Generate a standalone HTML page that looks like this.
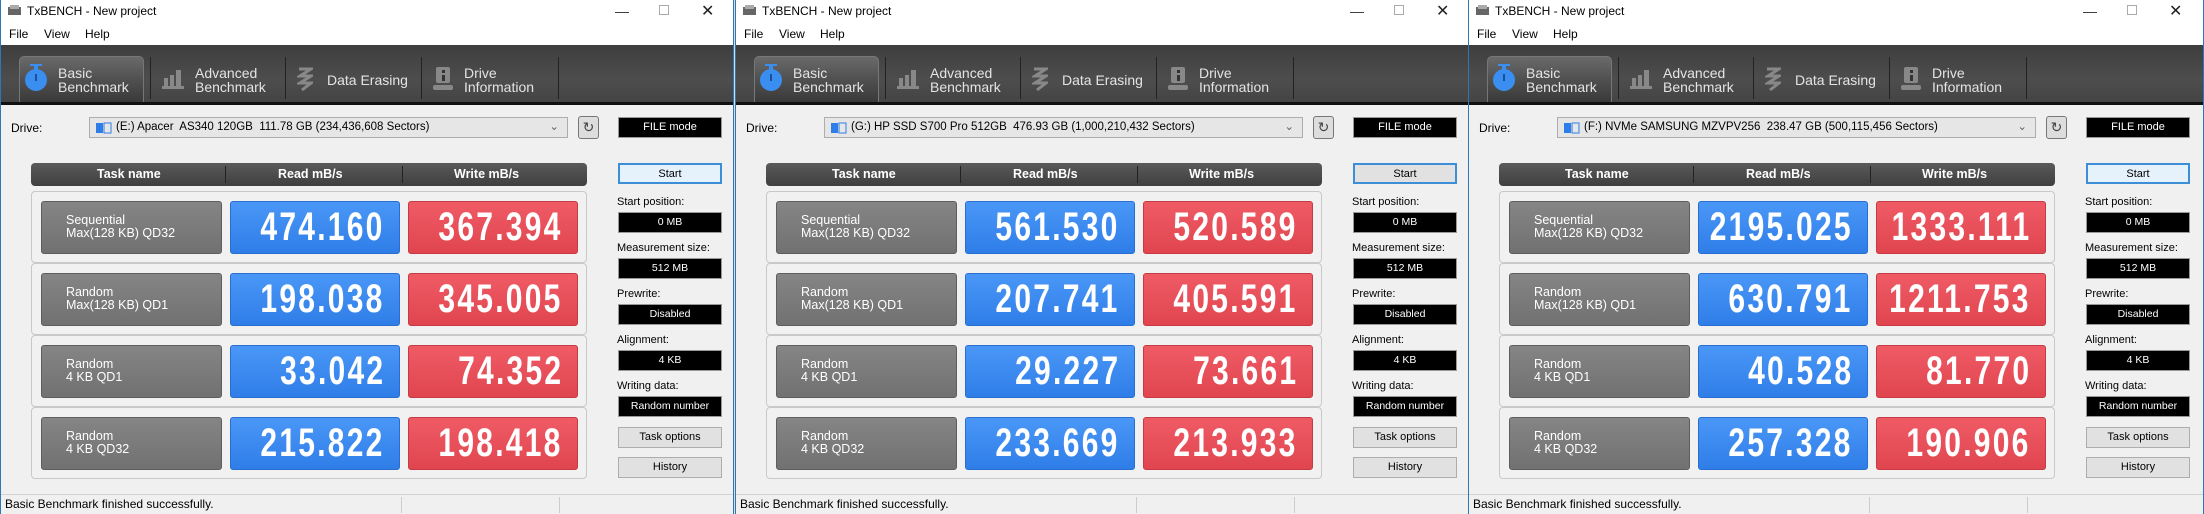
<!DOCTYPE html>
<html><head><meta charset="utf-8">
<style>
*{margin:0;padding:0;box-sizing:border-box}
body{width:2204px;height:514px;background:#dcdcdc;position:relative;overflow:hidden;font-family:"Liberation Sans",sans-serif}
.win{position:absolute;top:0;width:734px;height:514px;background:#f0f0f0;border-left:1px solid #2f76b8;border-right:1px solid #2f76b8;overflow:hidden}
.a{position:absolute}
.title{left:0;top:0;width:100%;height:22px;background:#fff}
.title .t{left:26px;top:4px;font-size:12px;color:#000}
.menu{left:0;top:22px;width:100%;height:23px;background:#fff;font-size:12px}
.tb{left:0;top:45px;width:100%;height:58px;background:linear-gradient(#3e3e3e,#4d4d4d 60%,#444)}
.bl{left:0;top:102px;width:100%;height:3px;background:#111}
.tab{top:56px;height:46px;color:#e4e4e4;font-size:14px;line-height:14px}
.act{left:18px;width:125px;border-radius:5px 5px 0 0;background:linear-gradient(#6a6a6a,#505050 50%,#3a3a3a);border:1px solid #777;border-bottom:none}
.div{top:57px;width:1px;height:42px;background:#222}
.lbl{font-size:12px;color:#000}
.combo{left:88px;top:117px;width:479px;height:21px;background:#e6e6e6;border:1px solid #adadad;font-size:11.5px;line-height:19px;padding-left:26px;color:#000}
.blk{background:#000;color:#fff;text-align:center;border:1px solid #999}
.hdr{left:30px;top:163px;width:556px;height:23px;border-radius:4px;background:linear-gradient(#5a5a5a,#3f3f3f);color:#fff;font-weight:bold;font-size:12.5px;line-height:23px}
.row{left:30px;width:556px;height:72px;border:1px solid #c9c9c9;border-radius:4px;background:#f1f1f1}
.c{top:9px;height:53px;border-radius:3px}
.g{left:9px;width:181px;background:linear-gradient(#858585,#717171);border:1px solid #5e5e5e;color:#fff;font-size:12.5px;line-height:13px;padding:12px 0 0 24px}
.b,.r{font-family:"Liberation Sans",sans-serif;font-weight:bold;font-size:40px;color:#fff;line-height:51px;white-space:nowrap}
.b span,.r span{position:absolute;right:14px;top:0;display:block;transform:scaleX(.75);transform-origin:right center;letter-spacing:3px}
.b{left:198px;width:170px;background:linear-gradient(#4a97f7,#2f7ee8);border:1px solid #2a6fd0}
.r{left:376px;width:170px;background:linear-gradient(#ef5b65,#e0454f);border:1px solid #c63a44}
.sl{left:616px;font-size:11px;color:#000}
.sb{left:617px;width:104px;height:21px;font-size:10.5px;line-height:19px}
.btn{left:617px;width:104px;height:21px;background:#e1e1e1;border:1px solid #adadad;font-size:11px;line-height:19px;text-align:center;color:#000}
.status{left:0;top:494px;width:100%;height:20px;border-top:1px solid #d2d2d2;font-size:12px;line-height:18px;padding-left:4px;color:#000}
</style></head><body>

<!-- WINDOW 1 -->
<div class="win" style="left:0">
<div class="a title"><svg class="a" style="left:6px;top:4px" width="16" height="14"><rect x="1" y="3" width="13" height="8" fill="#666"/><rect x="3" y="1" width="9" height="4" fill="#aaa"/></svg><div class="a t">TxBENCH - New project</div>
<div class="a" style="left:614px;top:3px;font-size:14px;color:#333">&#8212;</div><div class="a" style="left:658px;top:5px;width:10px;height:10px;border:1px solid #aaa"></div><div class="a" style="left:700px;top:1px;font-size:16px;color:#222">&#10005;</div></div>
<div class="a menu"><span class="a" style="left:8px;top:5px">File</span><span class="a" style="left:43px;top:5px">View</span><span class="a" style="left:84px;top:5px">Help</span></div>
<div class="a tb"></div><div class="a bl"></div>
<div class="a tab act"></div>
<svg class="a" style="left:22px;top:63px" width="26" height="30"><rect x="7" y="1" width="12" height="2" fill="#3a8ef0"/><rect x="11" y="2" width="4" height="5" fill="#3a8ef0"/><circle cx="13" cy="17" r="11" fill="#3a8ef0"/><rect x="12" y="11" width="2" height="7" fill="#1a4f9a"/></svg>
<div class="a tab" style="left:57px;top:66px">Basic<br>Benchmark</div>
<div class="a div" style="left:149px"></div>
<svg class="a" style="left:160px;top:68px" width="24" height="22"><rect x="1" y="18" width="22" height="3" fill="#888"/><rect x="3" y="10" width="4" height="9" fill="#888"/><rect x="9" y="7" width="4" height="12" fill="#888"/><rect x="15" y="2" width="5" height="17" fill="#888"/></svg>
<div class="a tab" style="left:194px;top:66px">Advanced<br>Benchmark</div>
<div class="a div" style="left:284px"></div>
<svg class="a" style="left:296px;top:66px" width="16" height="26"><path d="M2 3h12L3 10h11L3 17h11L5 24" stroke="#888" stroke-width="3" fill="none"/></svg>
<div class="a tab" style="left:326px;top:73px">Data Erasing</div>
<div class="a div" style="left:420px"></div>
<svg class="a" style="left:432px;top:66px" width="20" height="26"><rect x="3" y="1" width="14" height="16" rx="2" fill="#888"/><rect x="9" y="4" width="3" height="3" fill="#333"/><rect x="9" y="9" width="3" height="6" fill="#333"/><rect x="0" y="19" width="20" height="5" rx="2" fill="#888"/></svg>
<div class="a tab" style="left:463px;top:66px">Drive<br>Information</div>
<div class="a div" style="left:557px"></div>
<div class="a lbl" style="left:10px;top:121px">Drive:</div>
<div class="a combo"><svg class="a" style="left:5px;top:4px" width="18" height="12"><rect x="1" y="1" width="7" height="10" fill="#2f7ee8"/><rect x="9" y="1" width="7" height="10" fill="none" stroke="#2f7ee8"/></svg>(E:) Apacer&nbsp; AS340 120GB&nbsp; 111.78 GB (234,436,608 Sectors)<span class="a" style="right:8px;top:0;color:#666">&#8964;</span></div>
<div class="a" style="left:577px;top:116px;width:21px;height:23px;border:1px solid #777;border-radius:3px;background:#ddd;text-align:center;font-size:14px;line-height:21px;color:#444">&#8635;</div>
<div class="a blk" style="left:617px;top:117px;width:104px;height:21px;font-size:11px;line-height:19px">FILE mode</div>
<div class="a hdr"><span class="a" style="left:66px">Task name</span><span class="a" style="left:194px;top:3px;width:1px;height:17px;background:#222"></span><span class="a" style="left:247px">Read mB/s</span><span class="a" style="left:371px;top:3px;width:1px;height:17px;background:#222"></span><span class="a" style="left:423px">Write mB/s</span></div>
<div class="a row" style="top:191px"><div class="a c g">Sequential<br>Max(128 KB) QD32</div><div class="a c b"><span>474.160</span></div><div class="a c r"><span>367.394</span></div></div>
<div class="a row" style="top:263px"><div class="a c g">Random<br>Max(128 KB) QD1</div><div class="a c b"><span>198.038</span></div><div class="a c r"><span>345.005</span></div></div>
<div class="a row" style="top:335px"><div class="a c g">Random<br>4 KB QD1</div><div class="a c b"><span>33.042</span></div><div class="a c r"><span>74.352</span></div></div>
<div class="a row" style="top:407px"><div class="a c g">Random<br>4 KB QD32</div><div class="a c b"><span>215.822</span></div><div class="a c r"><span>198.418</span></div></div>
<div class="a btn" style="top:163px;background:#e5f1fb;border:2px solid #3c8ed6">Start</div>
<div class="a sl" style="top:196px">Start position:</div><div class="a sb blk" style="top:212px">0 MB</div>
<div class="a sl" style="top:242px">Measurement size:</div><div class="a sb blk" style="top:258px">512 MB</div>
<div class="a sl" style="top:288px">Prewrite:</div><div class="a sb blk" style="top:304px">Disabled</div>
<div class="a sl" style="top:334px">Alignment:</div><div class="a sb blk" style="top:350px">4 KB</div>
<div class="a sl" style="top:380px">Writing data:</div><div class="a sb blk" style="top:396px">Random number</div>
<div class="a btn" style="top:427px">Task options</div>
<div class="a btn" style="top:457px">History</div>
<div class="a status">Basic Benchmark finished successfully.<span class="a" style="left:400px;top:2px;width:1px;height:16px;background:#ccc"></span><span class="a" style="left:558px;top:2px;width:1px;height:16px;background:#ccc"></span></div>
</div>

<!-- WINDOW 2 -->
<div class="win" style="left:735px">
<div class="a title"><svg class="a" style="left:6px;top:4px" width="16" height="14"><rect x="1" y="3" width="13" height="8" fill="#666"/><rect x="3" y="1" width="9" height="4" fill="#aaa"/></svg><div class="a t">TxBENCH - New project</div>
<div class="a" style="left:614px;top:3px;font-size:14px;color:#333">&#8212;</div><div class="a" style="left:658px;top:5px;width:10px;height:10px;border:1px solid #aaa"></div><div class="a" style="left:700px;top:1px;font-size:16px;color:#222">&#10005;</div></div>
<div class="a menu"><span class="a" style="left:8px;top:5px">File</span><span class="a" style="left:43px;top:5px">View</span><span class="a" style="left:84px;top:5px">Help</span></div>
<div class="a tb"></div><div class="a bl"></div>
<div class="a tab act"></div>
<svg class="a" style="left:22px;top:63px" width="26" height="30"><rect x="7" y="1" width="12" height="2" fill="#3a8ef0"/><rect x="11" y="2" width="4" height="5" fill="#3a8ef0"/><circle cx="13" cy="17" r="11" fill="#3a8ef0"/><rect x="12" y="11" width="2" height="7" fill="#1a4f9a"/></svg>
<div class="a tab" style="left:57px;top:66px">Basic<br>Benchmark</div>
<div class="a div" style="left:149px"></div>
<svg class="a" style="left:160px;top:68px" width="24" height="22"><rect x="1" y="18" width="22" height="3" fill="#888"/><rect x="3" y="10" width="4" height="9" fill="#888"/><rect x="9" y="7" width="4" height="12" fill="#888"/><rect x="15" y="2" width="5" height="17" fill="#888"/></svg>
<div class="a tab" style="left:194px;top:66px">Advanced<br>Benchmark</div>
<div class="a div" style="left:284px"></div>
<svg class="a" style="left:296px;top:66px" width="16" height="26"><path d="M2 3h12L3 10h11L3 17h11L5 24" stroke="#888" stroke-width="3" fill="none"/></svg>
<div class="a tab" style="left:326px;top:73px">Data Erasing</div>
<div class="a div" style="left:420px"></div>
<svg class="a" style="left:432px;top:66px" width="20" height="26"><rect x="3" y="1" width="14" height="16" rx="2" fill="#888"/><rect x="9" y="4" width="3" height="3" fill="#333"/><rect x="9" y="9" width="3" height="6" fill="#333"/><rect x="0" y="19" width="20" height="5" rx="2" fill="#888"/></svg>
<div class="a tab" style="left:463px;top:66px">Drive<br>Information</div>
<div class="a div" style="left:557px"></div>
<div class="a lbl" style="left:10px;top:121px">Drive:</div>
<div class="a combo"><svg class="a" style="left:5px;top:4px" width="18" height="12"><rect x="1" y="1" width="7" height="10" fill="#2f7ee8"/><rect x="9" y="1" width="7" height="10" fill="none" stroke="#2f7ee8"/></svg>(G:) HP SSD S700 Pro 512GB&nbsp; 476.93 GB (1,000,210,432 Sectors)<span class="a" style="right:8px;top:0;color:#666">&#8964;</span></div>
<div class="a" style="left:577px;top:116px;width:21px;height:23px;border:1px solid #777;border-radius:3px;background:#ddd;text-align:center;font-size:14px;line-height:21px;color:#444">&#8635;</div>
<div class="a blk" style="left:617px;top:117px;width:104px;height:21px;font-size:11px;line-height:19px">FILE mode</div>
<div class="a hdr"><span class="a" style="left:66px">Task name</span><span class="a" style="left:194px;top:3px;width:1px;height:17px;background:#222"></span><span class="a" style="left:247px">Read mB/s</span><span class="a" style="left:371px;top:3px;width:1px;height:17px;background:#222"></span><span class="a" style="left:423px">Write mB/s</span></div>
<div class="a row" style="top:191px"><div class="a c g">Sequential<br>Max(128 KB) QD32</div><div class="a c b"><span>561.530</span></div><div class="a c r"><span>520.589</span></div></div>
<div class="a row" style="top:263px"><div class="a c g">Random<br>Max(128 KB) QD1</div><div class="a c b"><span>207.741</span></div><div class="a c r"><span>405.591</span></div></div>
<div class="a row" style="top:335px"><div class="a c g">Random<br>4 KB QD1</div><div class="a c b"><span>29.227</span></div><div class="a c r"><span>73.661</span></div></div>
<div class="a row" style="top:407px"><div class="a c g">Random<br>4 KB QD32</div><div class="a c b"><span>233.669</span></div><div class="a c r"><span>213.933</span></div></div>
<div class="a btn" style="top:163px;background:#e1e1e1;border:2px solid #3c8ed6">Start</div>
<div class="a sl" style="top:196px">Start position:</div><div class="a sb blk" style="top:212px">0 MB</div>
<div class="a sl" style="top:242px">Measurement size:</div><div class="a sb blk" style="top:258px">512 MB</div>
<div class="a sl" style="top:288px">Prewrite:</div><div class="a sb blk" style="top:304px">Disabled</div>
<div class="a sl" style="top:334px">Alignment:</div><div class="a sb blk" style="top:350px">4 KB</div>
<div class="a sl" style="top:380px">Writing data:</div><div class="a sb blk" style="top:396px">Random number</div>
<div class="a btn" style="top:427px">Task options</div>
<div class="a btn" style="top:457px">History</div>
<div class="a status">Basic Benchmark finished successfully.<span class="a" style="left:400px;top:2px;width:1px;height:16px;background:#ccc"></span><span class="a" style="left:558px;top:2px;width:1px;height:16px;background:#ccc"></span></div>
</div>

<!-- WINDOW 3 -->
<div class="win" style="left:1468px;width:736px">
<div class="a title"><svg class="a" style="left:6px;top:4px" width="16" height="14"><rect x="1" y="3" width="13" height="8" fill="#666"/><rect x="3" y="1" width="9" height="4" fill="#aaa"/></svg><div class="a t">TxBENCH - New project</div>
<div class="a" style="left:614px;top:3px;font-size:14px;color:#333">&#8212;</div><div class="a" style="left:658px;top:5px;width:10px;height:10px;border:1px solid #aaa"></div><div class="a" style="left:700px;top:1px;font-size:16px;color:#222">&#10005;</div></div>
<div class="a menu"><span class="a" style="left:8px;top:5px">File</span><span class="a" style="left:43px;top:5px">View</span><span class="a" style="left:84px;top:5px">Help</span></div>
<div class="a tb"></div><div class="a bl"></div>
<div class="a tab act"></div>
<svg class="a" style="left:22px;top:63px" width="26" height="30"><rect x="7" y="1" width="12" height="2" fill="#3a8ef0"/><rect x="11" y="2" width="4" height="5" fill="#3a8ef0"/><circle cx="13" cy="17" r="11" fill="#3a8ef0"/><rect x="12" y="11" width="2" height="7" fill="#1a4f9a"/></svg>
<div class="a tab" style="left:57px;top:66px">Basic<br>Benchmark</div>
<div class="a div" style="left:149px"></div>
<svg class="a" style="left:160px;top:68px" width="24" height="22"><rect x="1" y="18" width="22" height="3" fill="#888"/><rect x="3" y="10" width="4" height="9" fill="#888"/><rect x="9" y="7" width="4" height="12" fill="#888"/><rect x="15" y="2" width="5" height="17" fill="#888"/></svg>
<div class="a tab" style="left:194px;top:66px">Advanced<br>Benchmark</div>
<div class="a div" style="left:284px"></div>
<svg class="a" style="left:296px;top:66px" width="16" height="26"><path d="M2 3h12L3 10h11L3 17h11L5 24" stroke="#888" stroke-width="3" fill="none"/></svg>
<div class="a tab" style="left:326px;top:73px">Data Erasing</div>
<div class="a div" style="left:420px"></div>
<svg class="a" style="left:432px;top:66px" width="20" height="26"><rect x="3" y="1" width="14" height="16" rx="2" fill="#888"/><rect x="9" y="4" width="3" height="3" fill="#333"/><rect x="9" y="9" width="3" height="6" fill="#333"/><rect x="0" y="19" width="20" height="5" rx="2" fill="#888"/></svg>
<div class="a tab" style="left:463px;top:66px">Drive<br>Information</div>
<div class="a div" style="left:557px"></div>
<div class="a lbl" style="left:10px;top:121px">Drive:</div>
<div class="a combo"><svg class="a" style="left:5px;top:4px" width="18" height="12"><rect x="1" y="1" width="7" height="10" fill="#2f7ee8"/><rect x="9" y="1" width="7" height="10" fill="none" stroke="#2f7ee8"/></svg>(F:) NVMe SAMSUNG MZVPV256&nbsp; 238.47 GB (500,115,456 Sectors)<span class="a" style="right:8px;top:0;color:#666">&#8964;</span></div>
<div class="a" style="left:577px;top:116px;width:21px;height:23px;border:1px solid #777;border-radius:3px;background:#ddd;text-align:center;font-size:14px;line-height:21px;color:#444">&#8635;</div>
<div class="a blk" style="left:617px;top:117px;width:104px;height:21px;font-size:11px;line-height:19px">FILE mode</div>
<div class="a hdr"><span class="a" style="left:66px">Task name</span><span class="a" style="left:194px;top:3px;width:1px;height:17px;background:#222"></span><span class="a" style="left:247px">Read mB/s</span><span class="a" style="left:371px;top:3px;width:1px;height:17px;background:#222"></span><span class="a" style="left:423px">Write mB/s</span></div>
<div class="a row" style="top:191px"><div class="a c g">Sequential<br>Max(128 KB) QD32</div><div class="a c b"><span>2195.025</span></div><div class="a c r"><span>1333.111</span></div></div>
<div class="a row" style="top:263px"><div class="a c g">Random<br>Max(128 KB) QD1</div><div class="a c b"><span>630.791</span></div><div class="a c r"><span>1211.753</span></div></div>
<div class="a row" style="top:335px"><div class="a c g">Random<br>4 KB QD1</div><div class="a c b"><span>40.528</span></div><div class="a c r"><span>81.770</span></div></div>
<div class="a row" style="top:407px"><div class="a c g">Random<br>4 KB QD32</div><div class="a c b"><span>257.328</span></div><div class="a c r"><span>190.906</span></div></div>
<div class="a btn" style="top:163px;background:#e5f1fb;border:2px solid #3c8ed6">Start</div>
<div class="a sl" style="top:196px">Start position:</div><div class="a sb blk" style="top:212px">0 MB</div>
<div class="a sl" style="top:242px">Measurement size:</div><div class="a sb blk" style="top:258px">512 MB</div>
<div class="a sl" style="top:288px">Prewrite:</div><div class="a sb blk" style="top:304px">Disabled</div>
<div class="a sl" style="top:334px">Alignment:</div><div class="a sb blk" style="top:350px">4 KB</div>
<div class="a sl" style="top:380px">Writing data:</div><div class="a sb blk" style="top:396px">Random number</div>
<div class="a btn" style="top:427px">Task options</div>
<div class="a btn" style="top:457px">History</div>
<div class="a status">Basic Benchmark finished successfully.<span class="a" style="left:400px;top:2px;width:1px;height:16px;background:#ccc"></span><span class="a" style="left:558px;top:2px;width:1px;height:16px;background:#ccc"></span></div>
</div>

</body></html>
